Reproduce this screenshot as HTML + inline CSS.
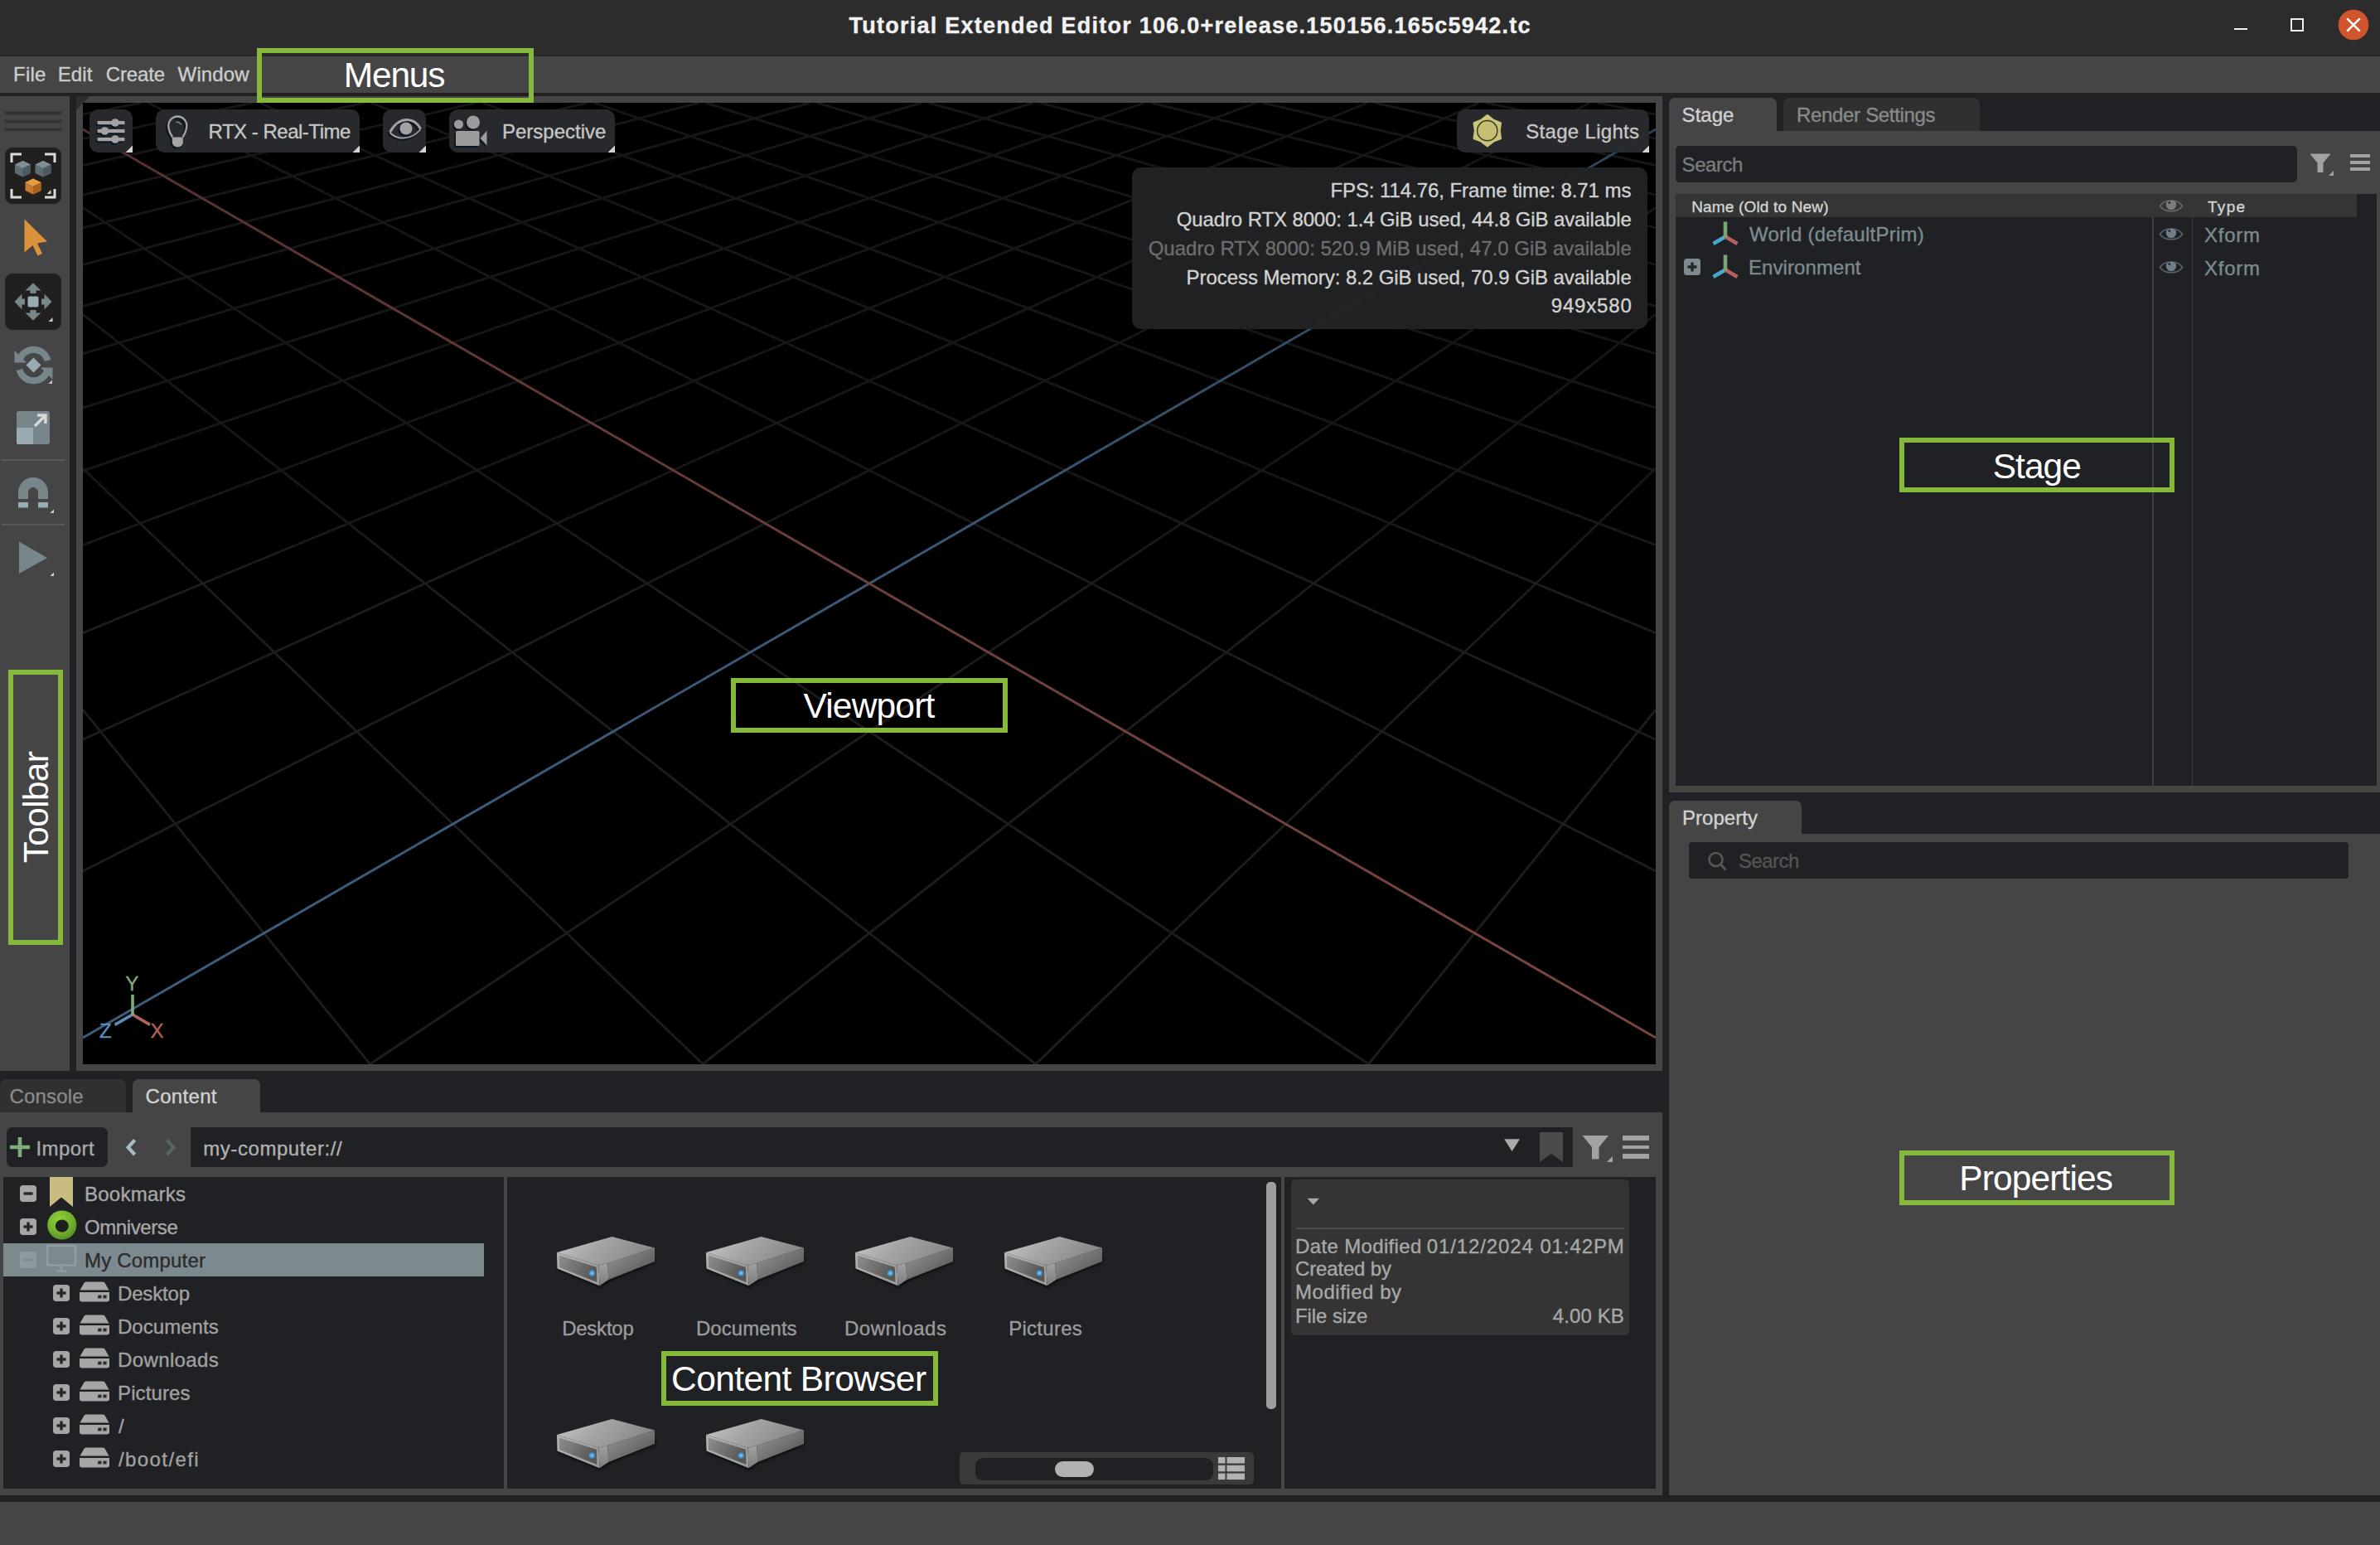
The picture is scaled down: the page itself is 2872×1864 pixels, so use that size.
<!DOCTYPE html>
<html lang="en"><head><meta charset="utf-8"><title>Tutorial Extended Editor</title><style>
html,body{margin:0;padding:0}
body{width:2872px;height:1864px;overflow:hidden;background:#202124;position:relative;font-family:"Liberation Sans", sans-serif;}
body div,body svg{position:absolute;box-sizing:border-box}
.t{position:absolute;white-space:nowrap;line-height:1;-webkit-text-stroke:0.35px;}
.a{-webkit-text-stroke:0;}
.ann{border:6px solid #86b93b;}
</style></head>
<body>
<div style="left:0px;top:0px;width:2872px;height:67px;background:#2c2c2c;"></div>
<div style="left:0px;top:66px;width:2872px;height:2px;background:#262626;"></div>
<span id="t1" class="t" style="top:17.94px;font-size:27px;color:#f2f2f2;font-weight:700;letter-spacing:1.247px;left:1024.60px;">Tutorial Extended Editor 106.0+release.150156.165c5942.tc</span>
<div style="left:2696px;top:33.5px;width:16px;height:2.6px;background:#f0f0f0;"></div>
<div style="left:2764px;top:22px;width:16px;height:16px;background:transparent;border:2px solid #f0f0f0;"></div>
<svg style="left:2820px;top:10px" width="40" height="40" viewBox="0 0 40 40"><circle cx="20" cy="20" r="18.3" fill="#d0552d"/><path d="M12.3 12.3 L27.7 27.7 M27.7 12.3 L12.3 27.7" stroke="#fff" stroke-width="2.6" fill="none"/></svg>
<div style="left:0px;top:68px;width:2872px;height:44px;background:#454545;"></div>
<div style="left:0px;top:112px;width:2872px;height:4px;background:#22211f;"></div>
<span id="t2" class="t" style="top:77.68px;font-size:24px;color:#cdcdcd;letter-spacing:0.225px;left:16.00px;">File</span>
<span id="t3" class="t" style="top:77.68px;font-size:24px;color:#cdcdcd;letter-spacing:0.104px;left:69.70px;">Edit</span>
<span id="t4" class="t" style="top:77.68px;font-size:24px;color:#cdcdcd;letter-spacing:-0.138px;left:127.80px;">Create</span>
<span id="t5" class="t" style="top:77.68px;font-size:24px;color:#cdcdcd;letter-spacing:0.135px;left:214.60px;">Window</span>
<div style="left:0px;top:1804px;width:2872px;height:8px;background:#22211f;"></div>
<div style="left:0px;top:1812px;width:2872px;height:52px;background:#454545;"></div>
<div style="left:0px;top:116px;width:84px;height:1176px;background:#454545;"></div>
<div style="left:6px;top:135.2px;width:68px;height:2.8px;background:#323232;box-shadow:0 0 1.6px 0.6px #3b3b3b;"></div>
<div style="left:6px;top:145.29999999999998px;width:68px;height:2.8px;background:#323232;box-shadow:0 0 1.6px 0.6px #3b3b3b;"></div>
<div style="left:6px;top:155.4px;width:68px;height:2.8px;background:#323232;box-shadow:0 0 1.6px 0.6px #3b3b3b;"></div>
<div style="left:2px;top:554px;width:76px;height:2px;background:#585858;"></div>
<div style="left:2px;top:632px;width:76px;height:2px;background:#585858;"></div>
<div style="left:6px;top:178px;width:67.5px;height:67.5px;background:#22201f;border-radius:9px;"></div>
<svg style="left:6px;top:178px" width="68" height="68" viewBox="0 0 68 68"><g fill="none" stroke="#dcdcdc" stroke-width="3"><path d="M8 18V8H20"/><path d="M48 8H60V18"/><path d="M8 50V60H20"/><path d="M48 60H60V50"/></g><g><path d="M21.5 16 L31 20.5 L31 31 L21.5 35.5 L12 31 L12 20.5Z" fill="#5c6c72"/><path d="M21.5 16 L31 20.5 L21.5 25 L12 20.5Z" fill="#7f8f95"/><path d="M21.5 25 L31 20.5 L31 31 L21.5 35.5Z" fill="#4c5a60"/><path d="M46 16 L55.5 20.5 L55.5 31 L46 35.5 L36.5 31 L36.5 20.5Z" fill="#5c6c72"/><path d="M46 16 L55.5 20.5 L46 25 L36.5 20.5Z" fill="#7f8f95"/><path d="M46 25 L55.5 20.5 L55.5 31 L46 35.5Z" fill="#4c5a60"/><path d="M34 37.5 L43.5 42 L43.5 52 L34 56.5 L24.5 52 L24.5 42Z" fill="#c47a2a"/><path d="M34 37.5 L43.5 42 L34 46.5 L24.5 42Z" fill="#e89c45"/><path d="M34 46.5 L43.5 42 L43.5 52 L34 56.5Z" fill="#a8641f"/></g><path d="M55.5 51 L55.5 56 L50.5 56Z" fill="#cfcfcf"/></svg>
<svg style="left:20px;top:258px" width="48" height="56" viewBox="0 0 48 56"><path d="M9.5 6.5 L9.5 46.5 L19.5 38 L25.5 50.5 L31 48 L25 35.5 L37 33.5Z" fill="#dc913b"/></svg>
<div style="left:6px;top:330px;width:67.5px;height:67.5px;background:#22201f;border-radius:9px;"></div>
<svg style="left:6px;top:330px" width="68" height="68" viewBox="0 0 68 68"><rect x="27.5" y="27.5" width="13" height="13" rx="2" fill="#9aacb3"/><g fill="#76868b"><path d="M34 11.5 L43.5 20.5 H37.5 V24 H30.5 V20.5 H24.5Z"/><path d="M34 56.5 L43.5 47.5 H37.5 V44 H30.5 V47.5 H24.5Z"/><path d="M11.5 34 L20.5 24.5 V30.5 H24 V37.5 H20.5 V43.5Z"/><path d="M56.5 34 L47.5 24.5 V30.5 H44 V37.5 H47.5 V43.5Z"/></g><path d="M57.5 53 L57.5 58 L52.5 58Z" fill="#cfcfcf"/></svg>
<svg style="left:14px;top:414px" width="54" height="54" viewBox="0 0 54 54"><g fill="none" stroke="#76868b" stroke-width="8"><path d="M9.5 21 A17.5 17.5 0 0 1 43.5 21"/><path d="M43.5 32 A17.5 17.5 0 0 1 9.5 32"/></g><path d="M3.5 9 L3.5 23.5 L18 23.5Z" fill="#76868b"/><path d="M49.5 44 L49.5 29.5 L35 29.5Z" fill="#76868b"/><path d="M26.5 17.5 L35.5 26.5 L26.5 35.5 L17.5 26.5Z" fill="#9aacb3"/><path d="M49 44.5 L49 49 L44.5 49Z" fill="#cfcfcf"/></svg>
<svg style="left:18px;top:494px" width="46" height="46" viewBox="0 0 46 46"><rect x="2" y="2" width="40" height="40" rx="3" fill="#76868b"/><rect x="2" y="22" width="20" height="20" rx="2" fill="#9aacb3"/><path d="M24 20 L36 8 M27 7 H37 V17" stroke="#d8d8d8" stroke-width="3.4" fill="none"/></svg>
<svg style="left:18px;top:572px" width="50" height="50" viewBox="0 0 50 50"><path d="M4 30 V22 A18 18 0 0 1 40 22 V30 H28 V22 A6 6 0 0 0 16 22 V30Z" fill="#76868b"/><rect x="4" y="34" width="12" height="6.5" fill="#9aacb3"/><rect x="28" y="34" width="12" height="6.5" fill="#9aacb3"/><path d="M47 42.5 L47 47 L42.5 47Z" fill="#cfcfcf"/></svg>
<svg style="left:18px;top:648px" width="50" height="50" viewBox="0 0 50 50"><path d="M5 5.5 L39 25 L5 44Z" fill="#76868b"/><path d="M47 42.5 L47 47 L42.5 47Z" fill="#cfcfcf"/></svg>
<div style="left:92px;top:116px;width:1914px;height:1176px;background:#454545;"></div>
<svg style="left:92px;top:116px" width="18" height="18" viewBox="0 0 18 18"><path d="M0 0 H16.5 L0 17Z" fill="#2e2e2e"/></svg>
<div style="left:100px;top:124px;width:1898px;height:1160px;background:#000;"></div>
<svg style="left:100px;top:124px" width="1898" height="1160" viewBox="0 0 1898 1160"><defs><linearGradient id="gg" gradientUnits="userSpaceOnUse" x1="0" y1="0" x2="0" y2="1160"><stop offset="0" stop-color="#151515"/><stop offset="0.5" stop-color="#1a1a1a"/><stop offset="1" stop-color="#1f1f1f"/></linearGradient><linearGradient id="gr" gradientUnits="userSpaceOnUse" x1="0" y1="0" x2="0" y2="1160"><stop offset="0" stop-color="#52302e"/><stop offset="0.5" stop-color="#6b3f3c"/><stop offset="1" stop-color="#78463f"/></linearGradient><linearGradient id="gb" gradientUnits="userSpaceOnUse" x1="0" y1="0" x2="0" y2="1160"><stop offset="0" stop-color="#2b4157"/><stop offset="0.5" stop-color="#3a5873"/><stop offset="1" stop-color="#3c5d7b"/></linearGradient><filter id="bl" x="0" y="0" width="100%" height="100%" filterUnits="userSpaceOnUse"><feGaussianBlur stdDeviation="0.55"/></filter></defs><g filter="url(#bl)"><path d="M70.6 0.0L0.0 14.2M1827.4 0.0L1898.0 14.2M205.1 0.0L0.0 43.4M1692.9 0.0L1898.0 43.4M339.6 0.0L0.0 75.5M1558.4 0.0L1898.0 75.5M474.1 0.0L0.0 111.1M1423.9 0.0L1898.0 111.1M608.6 0.0L0.0 150.8M1289.4 0.0L1898.0 150.8M743.1 0.0L0.0 195.3M1154.9 0.0L1898.0 195.3M877.6 0.0L0.0 245.5M1020.4 0.0L1898.0 245.5M1012.0 0.0L0.0 302.6M886.0 0.0L1898.0 302.6M1146.5 0.0L0.0 368.2M751.5 0.0L1898.0 368.2M1281.0 0.0L0.0 444.2M617.0 0.0L1898.0 444.2M1415.5 0.0L0.0 533.5M482.5 0.0L1898.0 533.5M1550.0 0.0L0.0 639.7M348.0 0.0L1898.0 639.7M1684.5 0.0L0.0 768.3M213.5 0.0L1898.0 768.3M1819.0 0.0L0.0 927.0M79.0 0.0L1898.0 927.0M1898.0 126.5L346.2 1160.0M0.0 126.5L1551.8 1160.0M1898.0 255.3L747.9 1160.0M0.0 255.3L1150.1 1160.0M1898.0 441.0L1149.6 1160.0M0.0 441.0L748.4 1160.0M1898.0 732.3L1551.3 1160.0M0.0 732.3L346.7 1160.0" stroke="url(#gg)" stroke-width="2.9" fill="none"/><path d="M1898.0 32.0L0.0 1128.0" stroke="url(#gb)" stroke-width="3" fill="none"/><path d="M0.0 32.0L1898.0 1128.0" stroke="url(#gr)" stroke-width="3" fill="none"/></g><g fill="none" stroke-width="3.6"><path d="M60 1100 L38.5 1112.4" stroke="#5b8dbd"/><path d="M60 1100 L81 1112.4" stroke="#b7615d"/><path d="M60 1101 L60 1076" stroke="#80ac7c"/></g></svg>
<span id="t6" class="t" style="top:1175.28px;font-size:24px;color:#80ac7c;left:151.30px;">Y</span>
<span id="t7" class="t" style="top:1231.68px;font-size:24px;color:#b7615d;left:181.40px;">X</span>
<span id="t8" class="t" style="top:1231.68px;font-size:24px;color:#5b8dbd;left:120.00px;">Z</span>
<svg style="left:108px;top:132px" width="54" height="54" viewBox="0 0 54 54"><rect x="0" y="0" width="52" height="52" rx="10.5" fill="rgba(40,42,45,0.97)"/><g transform="translate(-1.6 2)" fill="#0a1526"><rect x="9.5" y="14" width="33" height="4.2" rx="1"/><circle cx="31" cy="16" r="4.8"/><rect x="9.5" y="24" width="33" height="4.2" rx="1"/><circle cx="18.5" cy="26" r="4.8"/><rect x="9.5" y="34" width="33" height="4.2" rx="1"/><circle cx="31" cy="36" r="4.8"/></g><g transform="translate(0 0)" fill="#a2a2a2"><rect x="9.5" y="14" width="33" height="4.2" rx="1"/><circle cx="31" cy="16" r="4.8"/><rect x="9.5" y="24" width="33" height="4.2" rx="1"/><circle cx="18.5" cy="26" r="4.8"/><rect x="9.5" y="34" width="33" height="4.2" rx="1"/><circle cx="31" cy="36" r="4.8"/></g><path d="M52 52 L52 43.5 L43.5 52Z" fill="#d4d4d4"/></svg>
<svg style="left:188px;top:132px" width="248" height="54" viewBox="0 0 248 54"><rect x="0" y="0" width="246" height="52" rx="10.5" fill="rgba(40,42,45,0.97)"/><g transform="translate(-2 2)"><path d="M20.2 33.5 C16.5 28 15.3 24.5 15.3 19.5 A11 11 0 0 1 37.3 19.5 C37.3 24.5 36 28 32.4 33.5" fill="none" stroke="#0a1526" stroke-width="2.3"/><path d="M19.8 33.5 H32.8 V39.8 A6.5 5.6 0 0 1 19.8 39.8Z" fill="#0a1526"/></g><g transform="translate(0 0)"><path d="M20.2 33.5 C16.5 28 15.3 24.5 15.3 19.5 A11 11 0 0 1 37.3 19.5 C37.3 24.5 36 28 32.4 33.5" fill="none" stroke="#a4a4a4" stroke-width="2.3"/><path d="M19.8 33.5 H32.8 V39.8 A6.5 5.6 0 0 1 19.8 39.8Z" fill="#a4a4a4"/></g><path d="M24.5 15.5 A5 5 0 0 1 30.5 18.5" stroke="#8a8a8a" stroke-width="1.5" fill="none"/><path d="M246 52 L246 43.5 L237.5 52Z" fill="#d4d4d4"/></svg>
<span id="t9" class="t" style="top:147.38px;font-size:24px;color:#c6c6c6;letter-spacing:-0.489px;left:251.50px;">RTX - Real-Time</span>
<svg style="left:462px;top:132px" width="54" height="54" viewBox="0 0 54 54"><rect x="0" y="0" width="52" height="52" rx="10.5" fill="rgba(40,42,45,0.97)"/><g transform="translate(-1.6 2.2)"><path d="M8.5 27.5 C15 16 22 12.5 29 12.5 C36 12.5 42 17 45.5 23.5" fill="none" stroke="#0a1526" stroke-width="3.2"/><path d="M8.5 28 C18 37.5 35 37 45.5 24" fill="none" stroke="#0a1526" stroke-width="1.8"/><circle cx="28" cy="23" r="7.6" fill="#0a1526"/></g><g transform="translate(0 0)"><path d="M8.5 27.5 C15 16 22 12.5 29 12.5 C36 12.5 42 17 45.5 23.5" fill="none" stroke="#a2a2a2" stroke-width="3.2"/><path d="M8.5 28 C18 37.5 35 37 45.5 24" fill="none" stroke="#a2a2a2" stroke-width="1.8"/><circle cx="28" cy="23" r="7.6" fill="#a2a2a2"/></g><path d="M52 52 L52 43.5 L43.5 52Z" fill="#d4d4d4"/></svg>
<svg style="left:542px;top:132px" width="202" height="54" viewBox="0 0 202 54"><rect x="0" y="0" width="200" height="52" rx="10.5" fill="rgba(40,42,45,0.97)"/><g transform="translate(-1.8 2)" fill="#0a1526"><rect x="8" y="26" width="28.5" height="18" rx="1.5"/><circle cx="11.5" cy="18" r="5.6"/><circle cx="29" cy="15.5" r="8"/><path d="M37.5 35 L45.5 25.5 V43.5Z"/></g><g transform="translate(0 0)" fill="#9c9c9c"><rect x="8" y="26" width="28.5" height="18" rx="1.5"/><circle cx="11.5" cy="18" r="5.6"/><circle cx="29" cy="15.5" r="8"/><path d="M37.5 35 L45.5 25.5 V43.5Z"/></g><path d="M200 52 L200 43.5 L191.5 52Z" fill="#d4d4d4"/></svg>
<span id="t10" class="t" style="top:147.38px;font-size:24px;color:#c6c6c6;letter-spacing:-0.004px;left:606.00px;">Perspective</span>
<svg style="left:1758px;top:132px" width="234" height="54" viewBox="0 0 234 54"><rect x="0" y="0" width="232" height="52" rx="10.5" fill="rgba(40,42,45,0.97)"/><g><polygon points="36.8,7.5 44.0,13.2 52.6,16.6 51.2,25.7 52.6,34.8 44.0,38.2 36.8,43.9 29.6,38.2 21.0,34.8 22.4,25.7 21.0,16.6 29.6,13.2" fill="#c9c47a" stroke="#c9c47a" stroke-width="3" stroke-linejoin="round"/><circle cx="36.8" cy="25.7" r="12.1" fill="#c4bf72" stroke="#3a3a24" stroke-width="1.5"/></g><path d="M232 52 L232 43.5 L223.5 52Z" fill="#d4d4d4"/></svg>
<span id="t11" class="t" style="top:147.38px;font-size:24px;color:#c6c6c6;letter-spacing:0.315px;left:1841.20px;">Stage Lights</span>
<div style="left:1366px;top:202px;width:622px;height:195px;background:rgba(33,35,37,0.93);border-radius:11px;"></div>
<span id="t12" class="t" style="top:217.58px;font-size:24px;color:#d2d2d2;letter-spacing:-0.065px;right:903.67px;">FPS: 114.76, Frame time: 8.71 ms</span>
<span id="t13" class="t" style="top:252.68px;font-size:24px;color:#d2d2d2;letter-spacing:-0.115px;right:903.37px;">Quadro RTX 8000: 1.4 GiB used, 44.8 GiB available</span>
<span id="t14" class="t" style="top:287.68px;font-size:24px;color:#6e6e6e;letter-spacing:0.011px;right:903.24px;">Quadro RTX 8000: 520.9 MiB used, 47.0 GiB available</span>
<span id="t15" class="t" style="top:322.88px;font-size:24px;color:#d2d2d2;letter-spacing:-0.066px;right:903.32px;">Process Memory: 8.2 GiB used, 70.9 GiB available</span>
<span id="t16" class="t" style="top:356.98px;font-size:24px;color:#d2d2d2;letter-spacing:0.827px;right:902.43px;">949x580</span>
<div style="left:2014px;top:118px;width:130px;height:40px;background:#454545;border-radius:7px 7px 0 0;"></div>
<div style="left:2151.5px;top:118px;width:237px;height:40px;background:#303030;border-radius:7px 7px 0 0;"></div>
<span id="t17" class="t" style="top:127.08px;font-size:24px;color:#d2d2d2;letter-spacing:0.032px;left:2029.60px;">Stage</span>
<span id="t18" class="t" style="top:127.08px;font-size:24px;color:#8a8a8a;letter-spacing:-0.322px;left:2168.00px;">Render Settings</span>
<div style="left:2014px;top:158px;width:858px;height:798px;background:#454545;"></div>
<div style="left:2022px;top:176px;width:750px;height:44px;background:#202124;border-radius:5px;"></div>
<span id="t19" class="t" style="top:186.98px;font-size:24px;color:#7c7c7c;letter-spacing:-0.459px;left:2029.60px;">Search</span>
<svg style="left:2784px;top:182px" width="36" height="34" viewBox="0 0 36 34"><path d="M3.5 3.5 H28.5 L19.5 14.5 V26 H12.5 V14.5Z" fill="#a2a2a2"/><path d="M32 24 V30 H26Z" fill="#a2a2a2"/></svg>
<div style="left:2836px;top:186px;width:24px;height:4.4px;background:#a2a2a2;"></div>
<div style="left:2836px;top:194px;width:24px;height:4.4px;background:#a2a2a2;"></div>
<div style="left:2836px;top:202px;width:24px;height:4.4px;background:#a2a2a2;"></div>
<div style="left:2022px;top:234px;width:846px;height:714px;background:#202124;"></div>
<div style="left:2022px;top:234px;width:822px;height:28px;background:#343636;"></div>
<span id="t20" class="t" style="top:239.52px;font-size:19px;color:#d4d4d4;letter-spacing:0.171px;left:2041.20px;">Name (Old to New)</span>
<span id="t21" class="t" style="top:239.92px;font-size:19px;color:#d4d4d4;letter-spacing:1.292px;left:2664.00px;">Type</span>
<div style="left:2597px;top:262px;width:1.5px;height:686px;background:#3c3e42;"></div>
<div style="left:2644.5px;top:262px;width:1.5px;height:686px;background:#3c3e42;"></div>
<svg style="left:2605px;top:236.5px" width="30" height="22" viewBox="0 0 30 22"><path d="M1.5 11.5 C7 2.8 23 2.8 28.5 11.5 C23 19.8 7 19.8 1.5 11.5Z" fill="none" stroke="#676767" stroke-width="1.7"/><path d="M9 8 A6.2 6.6 0 1 0 21 8 A6.2 4.2 0 0 0 9 8Z" fill="#7c7c7c"/><circle cx="12.8" cy="7.6" r="1.5" fill="#2a2c30"/></svg>
<svg style="left:2605px;top:271px" width="30" height="22" viewBox="0 0 30 22"><path d="M1.5 11.5 C7 2.8 23 2.8 28.5 11.5 C23 19.8 7 19.8 1.5 11.5Z" fill="none" stroke="#56646b" stroke-width="1.7"/><path d="M9 8 A6.2 6.6 0 1 0 21 8 A6.2 4.2 0 0 0 9 8Z" fill="#70808a"/><circle cx="12.8" cy="7.6" r="1.5" fill="#2a2c30"/></svg>
<svg style="left:2605px;top:311px" width="30" height="22" viewBox="0 0 30 22"><path d="M1.5 11.5 C7 2.8 23 2.8 28.5 11.5 C23 19.8 7 19.8 1.5 11.5Z" fill="none" stroke="#56646b" stroke-width="1.7"/><path d="M9 8 A6.2 6.6 0 1 0 21 8 A6.2 4.2 0 0 0 9 8Z" fill="#70808a"/><circle cx="12.8" cy="7.6" r="1.5" fill="#2a2c30"/></svg>
<svg style="left:2064px;top:266px" width="36" height="32" viewBox="0 0 36 32"><g fill="none" stroke-width="4.6"><path d="M18 19.5 L3.5 28" stroke="#4aa8d0"/><path d="M18 19.5 L32.5 28" stroke="#b5605c"/><path d="M18 20.5 L18 1.5" stroke="#78a574"/></g></svg>
<svg style="left:2064px;top:306px" width="36" height="32" viewBox="0 0 36 32"><g fill="none" stroke-width="4.6"><path d="M18 19.5 L3.5 28" stroke="#4aa8d0"/><path d="M18 19.5 L32.5 28" stroke="#b5605c"/><path d="M18 20.5 L18 1.5" stroke="#78a574"/></g></svg>
<svg style="left:2032px;top:312px" width="20" height="20" viewBox="0 0 20 20"><rect width="20" height="20" rx="3.5" fill="#7d8b90"/><path d="M4.5 10 H15.5 M10 4.5 V15.5" stroke="#23272a" stroke-width="3.4"/></svg>
<span id="t22" class="t" style="top:271.38px;font-size:24px;color:#7d8b90;letter-spacing:0.251px;left:2111.00px;">World (defaultPrim)</span>
<span id="t23" class="t" style="top:311.38px;font-size:24px;color:#7d8b90;letter-spacing:0.074px;left:2110.00px;">Environment</span>
<span id="t24" class="t" style="top:271.68px;font-size:24px;color:#7d8b90;letter-spacing:0.746px;left:2660.00px;">Xform</span>
<span id="t25" class="t" style="top:311.68px;font-size:24px;color:#7d8b90;letter-spacing:0.746px;left:2660.00px;">Xform</span>
<div style="left:2014px;top:966px;width:160px;height:40px;background:#454545;border-radius:7px 7px 0 0;"></div>
<span id="t26" class="t" style="top:975.28px;font-size:24px;color:#d2d2d2;letter-spacing:0.042px;left:2030.00px;">Property</span>
<div style="left:2014px;top:1006px;width:858px;height:798px;background:#454545;"></div>
<div style="left:2038px;top:1016px;width:796px;height:44px;background:#202124;border-radius:4px;"></div>
<svg style="left:2058px;top:1024px" width="30" height="30" viewBox="0 0 30 30"><circle cx="12.5" cy="13" r="8" fill="none" stroke="#585858" stroke-width="2.6"/><path d="M18.5 19 L24.5 25.5" stroke="#585858" stroke-width="3"/></svg>
<span id="t27" class="t" style="top:1027.38px;font-size:24px;color:#555;letter-spacing:-0.539px;left:2098.00px;">Search</span>
<div style="left:0px;top:1302px;width:152px;height:40px;background:#303030;border-radius:7px 7px 0 0;"></div>
<div style="left:160px;top:1302px;width:154px;height:40px;background:#454545;border-radius:7px 7px 0 0;"></div>
<span id="t28" class="t" style="top:1311.48px;font-size:24px;color:#8a8a8a;letter-spacing:0.165px;left:11.60px;">Console</span>
<span id="t29" class="t" style="top:1311.48px;font-size:24px;color:#d2d2d2;letter-spacing:0.318px;left:175.50px;">Content</span>
<div style="left:0px;top:1342px;width:2006px;height:462px;background:#454545;"></div>
<div style="left:8px;top:1360px;width:122px;height:48px;background:#202124;border-radius:7px;"></div>
<svg style="left:10px;top:1370px" width="28" height="28" viewBox="0 0 28 28"><path d="M2 14 H26 M14 2 V26" stroke="#80ad7a" stroke-width="4.6"/></svg>
<span id="t30" class="t" style="top:1373.68px;font-size:24px;color:#aaaaaa;letter-spacing:0.450px;left:43.40px;">Import</span>
<svg style="left:148px;top:1370px" width="72" height="28" viewBox="0 0 72 28"><path d="M14.6 5.5 L6.6 14.2 L14.6 23" stroke="#a9bbc2" stroke-width="4.2" fill="none"/><path d="M53.4 5.5 L61.4 14.2 L53.4 23" stroke="#56646a" stroke-width="4.2" fill="none"/></svg>
<div style="left:230px;top:1360px;width:1668px;height:48px;background:#202124;"></div>
<span id="t31" class="t" style="top:1373.68px;font-size:24px;color:#b0b0b0;letter-spacing:0.572px;left:245.20px;">my-computer://</span>
<svg style="left:1812px;top:1372px" width="26" height="20" viewBox="0 0 26 20"><path d="M3.2 2.2 H22 L12.6 17Z" fill="#ababab"/></svg>
<svg style="left:1856px;top:1364px" width="34" height="42" viewBox="0 0 34 42"><path d="M2 2 H30 V38 L16 28 L2 38Z" fill="#4a4a4a"/></svg>
<svg style="left:1906px;top:1366px" width="42" height="40" viewBox="0 0 42 40"><path d="M3.5 4 H35 L23.5 18 V32.5 H15 V18Z" fill="#a2a2a2"/><path d="M40 29 V36 H33Z" fill="#a2a2a2"/></svg>
<div style="left:1958px;top:1370px;width:32px;height:5.8px;background:#a2a2a2;"></div>
<div style="left:1958px;top:1381.6px;width:32px;height:4.6px;background:#a2a2a2;"></div>
<div style="left:1958px;top:1392px;width:32px;height:5.8px;background:#a2a2a2;"></div>
<div style="left:4px;top:1420px;width:604px;height:376px;background:#202124;"></div>
<div style="left:4px;top:1500px;width:580px;height:40px;background:#7c8a8f;"></div>
<svg style="left:24px;top:1430px" width="20" height="20" viewBox="0 0 20 20"><rect width="20" height="20" rx="4" fill="#a6a6a6"/><path d="M4.5 10 H15.5" stroke="#26282b" stroke-width="3.4"/></svg>
<svg style="left:60px;top:1420px" width="28" height="37" viewBox="0 0 28 37"><path d="M0 0 H28 V36 L14 24.5 L0 36Z" fill="#c9bc82"/></svg>
<span id="t32" class="t" style="top:1429.28px;font-size:24px;color:#a8a8a8;letter-spacing:0.246px;left:102.00px;">Bookmarks</span>
<svg style="left:24px;top:1470px" width="20" height="20" viewBox="0 0 20 20"><rect width="20" height="20" rx="4" fill="#a6a6a6"/><path d="M4.5 10 H15.5 M10 4.5 V15.5" stroke="#26282b" stroke-width="3.4"/></svg>
<svg style="left:56px;top:1459px" width="38" height="38" viewBox="0 0 38 38"><defs><radialGradient id="og" cx="0.4" cy="0.3" r="0.8"><stop offset="0" stop-color="#8fd03a"/><stop offset="0.6" stop-color="#6fae2c"/><stop offset="1" stop-color="#4c8420"/></radialGradient></defs><circle cx="18.8" cy="19" r="17.6" fill="url(#og)"/><ellipse cx="18.8" cy="20" rx="8" ry="7.4" fill="#1c1f1e"/></svg>
<span id="t33" class="t" style="top:1469.28px;font-size:24px;color:#a8a8a8;letter-spacing:-0.410px;left:102.00px;">Omniverse</span>
<svg style="left:24px;top:1510px" width="20" height="20" viewBox="0 0 20 20"><rect width="20" height="20" rx="4" fill="#8d9a9e"/><path d="M4.5 10 H15.5" stroke="#7f8d92" stroke-width="3.4"/></svg>
<svg style="left:55px;top:1501px" width="38" height="36" viewBox="0 0 38 36"><rect x="2" y="2" width="34" height="23.5" rx="2" fill="none" stroke="#909da1" stroke-width="2.6"/><path d="M19 26 V31.5 M13 32.5 H25" stroke="#909da1" stroke-width="2.6" fill="none"/></svg>
<span id="t34" class="t" style="top:1509.28px;font-size:24px;color:#2b2b2b;letter-spacing:0.196px;left:102.00px;">My Computer</span>
<svg style="left:64px;top:1550px" width="20" height="20" viewBox="0 0 20 20"><rect width="20" height="20" rx="4" fill="#a6a6a6"/><path d="M4.5 10 H15.5 M10 4.5 V15.5" stroke="#26282b" stroke-width="3.4"/></svg>
<svg style="left:95px;top:1545.5px" width="38" height="26" viewBox="0 0 38 26"><path d="M9 0.5 H29 Q31 0.5 31.8 2.2 L36.5 10.5 H1.5 L6.2 2.2 Q7 0.5 9 0.5Z" fill="#a6a6a6"/><path d="M1 13 H37 V21.5 Q37 24.5 34 24.5 H4 Q1 24.5 1 21.5Z" fill="#a6a6a6"/><rect x="23.2" y="16.6" width="4.2" height="3.8" fill="#2a2c2f"/><rect x="29.4" y="16.6" width="4.2" height="3.8" fill="#2a2c2f"/></svg>
<span id="t35" class="t" style="top:1549.38px;font-size:24px;color:#a2a2a2;letter-spacing:-0.166px;left:142.00px;">Desktop</span>
<svg style="left:64px;top:1590px" width="20" height="20" viewBox="0 0 20 20"><rect width="20" height="20" rx="4" fill="#a6a6a6"/><path d="M4.5 10 H15.5 M10 4.5 V15.5" stroke="#26282b" stroke-width="3.4"/></svg>
<svg style="left:95px;top:1585.5px" width="38" height="26" viewBox="0 0 38 26"><path d="M9 0.5 H29 Q31 0.5 31.8 2.2 L36.5 10.5 H1.5 L6.2 2.2 Q7 0.5 9 0.5Z" fill="#a6a6a6"/><path d="M1 13 H37 V21.5 Q37 24.5 34 24.5 H4 Q1 24.5 1 21.5Z" fill="#a6a6a6"/><rect x="23.2" y="16.6" width="4.2" height="3.8" fill="#2a2c2f"/><rect x="29.4" y="16.6" width="4.2" height="3.8" fill="#2a2c2f"/></svg>
<span id="t36" class="t" style="top:1589.38px;font-size:24px;color:#a2a2a2;letter-spacing:0.040px;left:142.00px;">Documents</span>
<svg style="left:64px;top:1630px" width="20" height="20" viewBox="0 0 20 20"><rect width="20" height="20" rx="4" fill="#a6a6a6"/><path d="M4.5 10 H15.5 M10 4.5 V15.5" stroke="#26282b" stroke-width="3.4"/></svg>
<svg style="left:95px;top:1625.5px" width="38" height="26" viewBox="0 0 38 26"><path d="M9 0.5 H29 Q31 0.5 31.8 2.2 L36.5 10.5 H1.5 L6.2 2.2 Q7 0.5 9 0.5Z" fill="#a6a6a6"/><path d="M1 13 H37 V21.5 Q37 24.5 34 24.5 H4 Q1 24.5 1 21.5Z" fill="#a6a6a6"/><rect x="23.2" y="16.6" width="4.2" height="3.8" fill="#2a2c2f"/><rect x="29.4" y="16.6" width="4.2" height="3.8" fill="#2a2c2f"/></svg>
<span id="t37" class="t" style="top:1629.38px;font-size:24px;color:#a2a2a2;letter-spacing:0.383px;left:142.00px;">Downloads</span>
<svg style="left:64px;top:1670px" width="20" height="20" viewBox="0 0 20 20"><rect width="20" height="20" rx="4" fill="#a6a6a6"/><path d="M4.5 10 H15.5 M10 4.5 V15.5" stroke="#26282b" stroke-width="3.4"/></svg>
<svg style="left:95px;top:1665.5px" width="38" height="26" viewBox="0 0 38 26"><path d="M9 0.5 H29 Q31 0.5 31.8 2.2 L36.5 10.5 H1.5 L6.2 2.2 Q7 0.5 9 0.5Z" fill="#a6a6a6"/><path d="M1 13 H37 V21.5 Q37 24.5 34 24.5 H4 Q1 24.5 1 21.5Z" fill="#a6a6a6"/><rect x="23.2" y="16.6" width="4.2" height="3.8" fill="#2a2c2f"/><rect x="29.4" y="16.6" width="4.2" height="3.8" fill="#2a2c2f"/></svg>
<span id="t38" class="t" style="top:1669.38px;font-size:24px;color:#a2a2a2;letter-spacing:0.129px;left:142.00px;">Pictures</span>
<svg style="left:64px;top:1710px" width="20" height="20" viewBox="0 0 20 20"><rect width="20" height="20" rx="4" fill="#a6a6a6"/><path d="M4.5 10 H15.5 M10 4.5 V15.5" stroke="#26282b" stroke-width="3.4"/></svg>
<svg style="left:95px;top:1705.5px" width="38" height="26" viewBox="0 0 38 26"><path d="M9 0.5 H29 Q31 0.5 31.8 2.2 L36.5 10.5 H1.5 L6.2 2.2 Q7 0.5 9 0.5Z" fill="#a6a6a6"/><path d="M1 13 H37 V21.5 Q37 24.5 34 24.5 H4 Q1 24.5 1 21.5Z" fill="#a6a6a6"/><rect x="23.2" y="16.6" width="4.2" height="3.8" fill="#2a2c2f"/><rect x="29.4" y="16.6" width="4.2" height="3.8" fill="#2a2c2f"/></svg>
<span id="t39" class="t" style="top:1709.38px;font-size:24px;color:#a2a2a2;left:143.00px;">/</span>
<svg style="left:64px;top:1750px" width="20" height="20" viewBox="0 0 20 20"><rect width="20" height="20" rx="4" fill="#a6a6a6"/><path d="M4.5 10 H15.5 M10 4.5 V15.5" stroke="#26282b" stroke-width="3.4"/></svg>
<svg style="left:95px;top:1745.5px" width="38" height="26" viewBox="0 0 38 26"><path d="M9 0.5 H29 Q31 0.5 31.8 2.2 L36.5 10.5 H1.5 L6.2 2.2 Q7 0.5 9 0.5Z" fill="#a6a6a6"/><path d="M1 13 H37 V21.5 Q37 24.5 34 24.5 H4 Q1 24.5 1 21.5Z" fill="#a6a6a6"/><rect x="23.2" y="16.6" width="4.2" height="3.8" fill="#2a2c2f"/><rect x="29.4" y="16.6" width="4.2" height="3.8" fill="#2a2c2f"/></svg>
<span id="t40" class="t" style="top:1749.38px;font-size:24px;color:#a2a2a2;letter-spacing:1.405px;left:143.00px;">/boot/efi</span>
<div style="left:612px;top:1420px;width:934px;height:376px;background:#202124;"></div>
<svg style="left:612px;top:1420px" width="934" height="376" viewBox="0 0 934 376"><defs><linearGradient id="ht" x1="0" y1="0" x2="1" y2="0.3"><stop offset="0" stop-color="#c9c9c9"/><stop offset="0.5" stop-color="#a4a4a4"/><stop offset="1" stop-color="#888"/></linearGradient><linearGradient id="hf" x1="0" y1="0" x2="1" y2="0.4"><stop offset="0" stop-color="#b6b6b6"/><stop offset="1" stop-color="#9c9c9c"/></linearGradient><linearGradient id="hp" x1="0" y1="0" x2="1" y2="0.4"><stop offset="0" stop-color="#8e8e8e"/><stop offset="1" stop-color="#575757"/></linearGradient><linearGradient id="hs" x1="0" y1="0" x2="1" y2="1"><stop offset="0" stop-color="#9a9a9a"/><stop offset="1" stop-color="#4c4c4c"/></linearGradient><linearGradient id="hc" x1="0" y1="0" x2="0" y2="1"><stop offset="0" stop-color="#a2a2a2"/><stop offset="1" stop-color="#7c7c7c"/></linearGradient><filter id="hb" x="-20%" y="-50%" width="140%" height="200%"><feGaussianBlur stdDeviation="1.6"/></filter></defs><g transform="translate(59 71.5)"><path d="M2 41 L53 62.5 L64 55 L120 32 L119 26 L2 36Z" fill="#000" opacity="0.55" filter="url(#hb)"/><path d="M1 19.5 L67.5 0.6 L119 14 L62.5 32.5 L51.5 35.3Z" fill="url(#ht)"/><path d="M1 19.5 L51.5 35.3 L52.5 59.8 L1.5 39Z" fill="url(#hf)"/><path d="M3.6 23 L48.8 37.2 L49.5 55.6 L4 37.6Z" fill="url(#hp)"/><path d="M51.5 35.3 L62.5 32.5 L63.2 52.6 L52.5 59.8Z" fill="url(#hc)"/><path d="M62.5 32.5 L119 14 L119 30.4 L63.2 52.6Z" fill="url(#hs)"/><circle cx="43.3" cy="44.5" r="3.6" fill="#3f97d6"/><circle cx="43.3" cy="44.5" r="1.8" fill="#74bdee"/></g><g transform="translate(239 71.5)"><path d="M2 41 L53 62.5 L64 55 L120 32 L119 26 L2 36Z" fill="#000" opacity="0.55" filter="url(#hb)"/><path d="M1 19.5 L67.5 0.6 L119 14 L62.5 32.5 L51.5 35.3Z" fill="url(#ht)"/><path d="M1 19.5 L51.5 35.3 L52.5 59.8 L1.5 39Z" fill="url(#hf)"/><path d="M3.6 23 L48.8 37.2 L49.5 55.6 L4 37.6Z" fill="url(#hp)"/><path d="M51.5 35.3 L62.5 32.5 L63.2 52.6 L52.5 59.8Z" fill="url(#hc)"/><path d="M62.5 32.5 L119 14 L119 30.4 L63.2 52.6Z" fill="url(#hs)"/><circle cx="43.3" cy="44.5" r="3.6" fill="#3f97d6"/><circle cx="43.3" cy="44.5" r="1.8" fill="#74bdee"/></g><g transform="translate(419 71.5)"><path d="M2 41 L53 62.5 L64 55 L120 32 L119 26 L2 36Z" fill="#000" opacity="0.55" filter="url(#hb)"/><path d="M1 19.5 L67.5 0.6 L119 14 L62.5 32.5 L51.5 35.3Z" fill="url(#ht)"/><path d="M1 19.5 L51.5 35.3 L52.5 59.8 L1.5 39Z" fill="url(#hf)"/><path d="M3.6 23 L48.8 37.2 L49.5 55.6 L4 37.6Z" fill="url(#hp)"/><path d="M51.5 35.3 L62.5 32.5 L63.2 52.6 L52.5 59.8Z" fill="url(#hc)"/><path d="M62.5 32.5 L119 14 L119 30.4 L63.2 52.6Z" fill="url(#hs)"/><circle cx="43.3" cy="44.5" r="3.6" fill="#3f97d6"/><circle cx="43.3" cy="44.5" r="1.8" fill="#74bdee"/></g><g transform="translate(599 71.5)"><path d="M2 41 L53 62.5 L64 55 L120 32 L119 26 L2 36Z" fill="#000" opacity="0.55" filter="url(#hb)"/><path d="M1 19.5 L67.5 0.6 L119 14 L62.5 32.5 L51.5 35.3Z" fill="url(#ht)"/><path d="M1 19.5 L51.5 35.3 L52.5 59.8 L1.5 39Z" fill="url(#hf)"/><path d="M3.6 23 L48.8 37.2 L49.5 55.6 L4 37.6Z" fill="url(#hp)"/><path d="M51.5 35.3 L62.5 32.5 L63.2 52.6 L52.5 59.8Z" fill="url(#hc)"/><path d="M62.5 32.5 L119 14 L119 30.4 L63.2 52.6Z" fill="url(#hs)"/><circle cx="43.3" cy="44.5" r="3.6" fill="#3f97d6"/><circle cx="43.3" cy="44.5" r="1.8" fill="#74bdee"/></g><g transform="translate(59 291.5)"><path d="M2 41 L53 62.5 L64 55 L120 32 L119 26 L2 36Z" fill="#000" opacity="0.55" filter="url(#hb)"/><path d="M1 19.5 L67.5 0.6 L119 14 L62.5 32.5 L51.5 35.3Z" fill="url(#ht)"/><path d="M1 19.5 L51.5 35.3 L52.5 59.8 L1.5 39Z" fill="url(#hf)"/><path d="M3.6 23 L48.8 37.2 L49.5 55.6 L4 37.6Z" fill="url(#hp)"/><path d="M51.5 35.3 L62.5 32.5 L63.2 52.6 L52.5 59.8Z" fill="url(#hc)"/><path d="M62.5 32.5 L119 14 L119 30.4 L63.2 52.6Z" fill="url(#hs)"/><circle cx="43.3" cy="44.5" r="3.6" fill="#3f97d6"/><circle cx="43.3" cy="44.5" r="1.8" fill="#74bdee"/></g><g transform="translate(239 291.5)"><path d="M2 41 L53 62.5 L64 55 L120 32 L119 26 L2 36Z" fill="#000" opacity="0.55" filter="url(#hb)"/><path d="M1 19.5 L67.5 0.6 L119 14 L62.5 32.5 L51.5 35.3Z" fill="url(#ht)"/><path d="M1 19.5 L51.5 35.3 L52.5 59.8 L1.5 39Z" fill="url(#hf)"/><path d="M3.6 23 L48.8 37.2 L49.5 55.6 L4 37.6Z" fill="url(#hp)"/><path d="M51.5 35.3 L62.5 32.5 L63.2 52.6 L52.5 59.8Z" fill="url(#hc)"/><path d="M62.5 32.5 L119 14 L119 30.4 L63.2 52.6Z" fill="url(#hs)"/><circle cx="43.3" cy="44.5" r="3.6" fill="#3f97d6"/><circle cx="43.3" cy="44.5" r="1.8" fill="#74bdee"/></g></svg>
<span id="t41" class="t" style="top:1591.38px;font-size:24px;color:#9c9c9c;letter-spacing:-0.233px;left:678.15px;">Desktop</span>
<span id="t42" class="t" style="top:1591.38px;font-size:24px;color:#9c9c9c;letter-spacing:0.027px;left:840.00px;">Documents</span>
<span id="t43" class="t" style="top:1591.38px;font-size:24px;color:#9c9c9c;letter-spacing:0.533px;left:1019.00px;">Downloads</span>
<span id="t44" class="t" style="top:1591.38px;font-size:24px;color:#9c9c9c;letter-spacing:0.258px;left:1217.25px;">Pictures</span>
<div style="left:1528px;top:1426px;width:12px;height:274px;background:#9e9e9e;border-radius:5px;"></div>
<div style="left:1158px;top:1752px;width:355px;height:39px;background:#3a3a3a;border-radius:5px;"></div>
<div style="left:1176.5px;top:1759px;width:287px;height:27px;background:#202124;border-radius:9px;"></div>
<div style="left:1273px;top:1762.5px;width:47px;height:19.5px;background:#b2b2b2;border-radius:9.5px;"></div>
<svg style="left:1469px;top:1757px" width="34" height="30" viewBox="0 0 34 30"><g fill="#b2b2b2"><rect x="1" y="1" width="8.5" height="7.5"/><rect x="11.5" y="1" width="21.5" height="7.5"/><rect x="1" y="10.8" width="8.5" height="7.5"/><rect x="11.5" y="10.8" width="21.5" height="7.5"/><rect x="1" y="20.6" width="8.5" height="7.5"/><rect x="11.5" y="20.6" width="21.5" height="7.5"/></g></svg>
<div style="left:1550px;top:1420px;width:448px;height:376px;background:#202124;"></div>
<div style="left:1558px;top:1423px;width:408px;height:188px;background:#343434;border-radius:5px;"></div>
<svg style="left:1576px;top:1444px" width="18" height="12" viewBox="0 0 18 12"><path d="M1.5 1.8 H16 L8.8 9.6Z" fill="#a8a8a8"/></svg>
<div style="left:1564px;top:1480.5px;width:396px;height:2px;background:#4c4c4c;"></div>
<span id="t45" class="t" style="top:1491.58px;font-size:24px;color:#a8a8a8;letter-spacing:0.356px;left:1563.00px;">Date Modified</span>
<span id="t46" class="t" style="top:1491.58px;font-size:24px;color:#a8a8a8;letter-spacing:0.891px;right:911.32px;">01/12/2024 01:42PM</span>
<span id="t47" class="t" style="top:1519.28px;font-size:24px;color:#a8a8a8;letter-spacing:-0.155px;left:1563.00px;">Created by</span>
<span id="t48" class="t" style="top:1547.48px;font-size:24px;color:#a8a8a8;letter-spacing:0.527px;left:1563.00px;">Modified by</span>
<span id="t49" class="t" style="top:1575.68px;font-size:24px;color:#a8a8a8;letter-spacing:-0.084px;left:1563.00px;">File size</span>
<span id="t50" class="t" style="top:1575.68px;font-size:24px;color:#a8a8a8;letter-spacing:0.102px;right:912.09px;">4.00 KB</span>
<div class="ann" style="left:310px;top:58px;width:334px;height:66px"></div>
<span id="t51" class="t a" style="top:70.42px;font-size:42.5px;color:#fff;letter-spacing:-1.203px;left:414.75px;">Menus</span>
<div class="ann" style="left:2292px;top:528px;width:332px;height:66px"></div>
<span id="t52" class="t a" style="top:542.02px;font-size:42.5px;color:#fff;letter-spacing:-0.982px;left:2404.75px;">Stage</span>
<div class="ann" style="left:882px;top:818px;width:334px;height:66px"></div>
<span id="t53" class="t a" style="top:830.92px;font-size:42.5px;color:#fff;letter-spacing:-0.825px;left:969.50px;">Viewport</span>
<div class="ann" style="left:798px;top:1630px;width:334px;height:66px"></div>
<span id="t54" class="t a" style="top:1642.92px;font-size:42.5px;color:#fff;letter-spacing:-0.613px;left:810.10px;">Content Browser</span>
<div class="ann" style="left:2292px;top:1388px;width:332px;height:66px"></div>
<span id="t55" class="t a" style="top:1401.42px;font-size:42.5px;color:#fff;letter-spacing:-0.861px;left:2364.15px;">Properties</span>
<div class="ann" style="left:10px;top:808px;width:66px;height:332px"></div>
<span id="t56" class="t a" style="left:23.22px;top:974.35px;font-size:42.5px;color:#fff;letter-spacing:-0.706px;transform-origin:0 0;transform:rotate(-90deg) translate(-50%,0);">Toolbar</span>
</body></html>
